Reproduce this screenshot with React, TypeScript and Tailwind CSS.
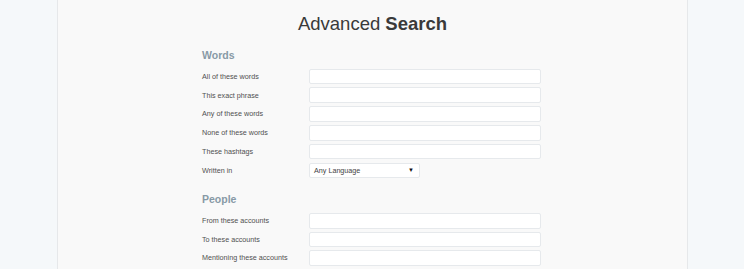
const wordFields = [
  "All of these words",
  "This exact phrase",
  "Any of these words",
  "None of these words",
  "These hashtags",
]

const peopleFields = ["From these accounts", "To these accounts", "Mentioning these accounts"]

function Row({ label, children }: { label: string; children: React.ReactNode }) {
  return (
    <div className="flex items-center h-[15.6px]">
      <label className="w-[107px] shrink-0 text-[7.2px] leading-none text-[#505050]">{label}</label>
      {children}
    </div>
  )
}

function TextField() {
  return <input type="text" className="w-[232px] h-[15.6px] bg-white border border-[#e6e9ec] rounded-[2px] outline-none" />
}

export default function App() {
  return (
    <div
      className="w-[744px] h-[269px] overflow-hidden bg-[#f5f8fa]"
      style={{ fontFamily: '"Liberation Sans", Arial, sans-serif' }}
    >
      <div className="ml-[57px] w-[631px] h-full bg-[#f9f9f9] border-x border-[#e6e8ea]">
        <h1 className="pt-[13px] text-center text-[18.5px] leading-[22px] text-[#3a3a3a]">
          Advanced <span className="font-bold">Search</span>
        </h1>

        <div className="ml-[144px]">
          <h2 className="mt-[13.8px] text-[10.5px] leading-[13px] font-bold text-[#8899a6]">Words</h2>
          <div className="mt-[6.9px] flex flex-col gap-y-[3.2px]">
            {wordFields.map((f) => (
              <Row key={f} label={f}>
                <TextField />
              </Row>
            ))}
            <Row label="Written in">
              <div className="w-[111px] h-[15.6px] bg-white border border-[#e6e9ec] rounded-[2px] flex items-center justify-between pl-[4px] pr-[5px]">
                <span className="text-[7.2px] leading-none text-[#444]">Any Language</span>
                <span className="text-[6px] leading-none text-[#111]">▼</span>
              </div>
            </Row>
          </div>

          <h2 className="mt-[15px] text-[10.5px] leading-[13px] font-bold text-[#8899a6]">People</h2>
          <div className="mt-[6.9px] flex flex-col gap-y-[3px]">
            {peopleFields.map((f) => (
              <Row key={f} label={f}>
                <TextField />
              </Row>
            ))}
          </div>
        </div>
      </div>
    </div>
  )
}
